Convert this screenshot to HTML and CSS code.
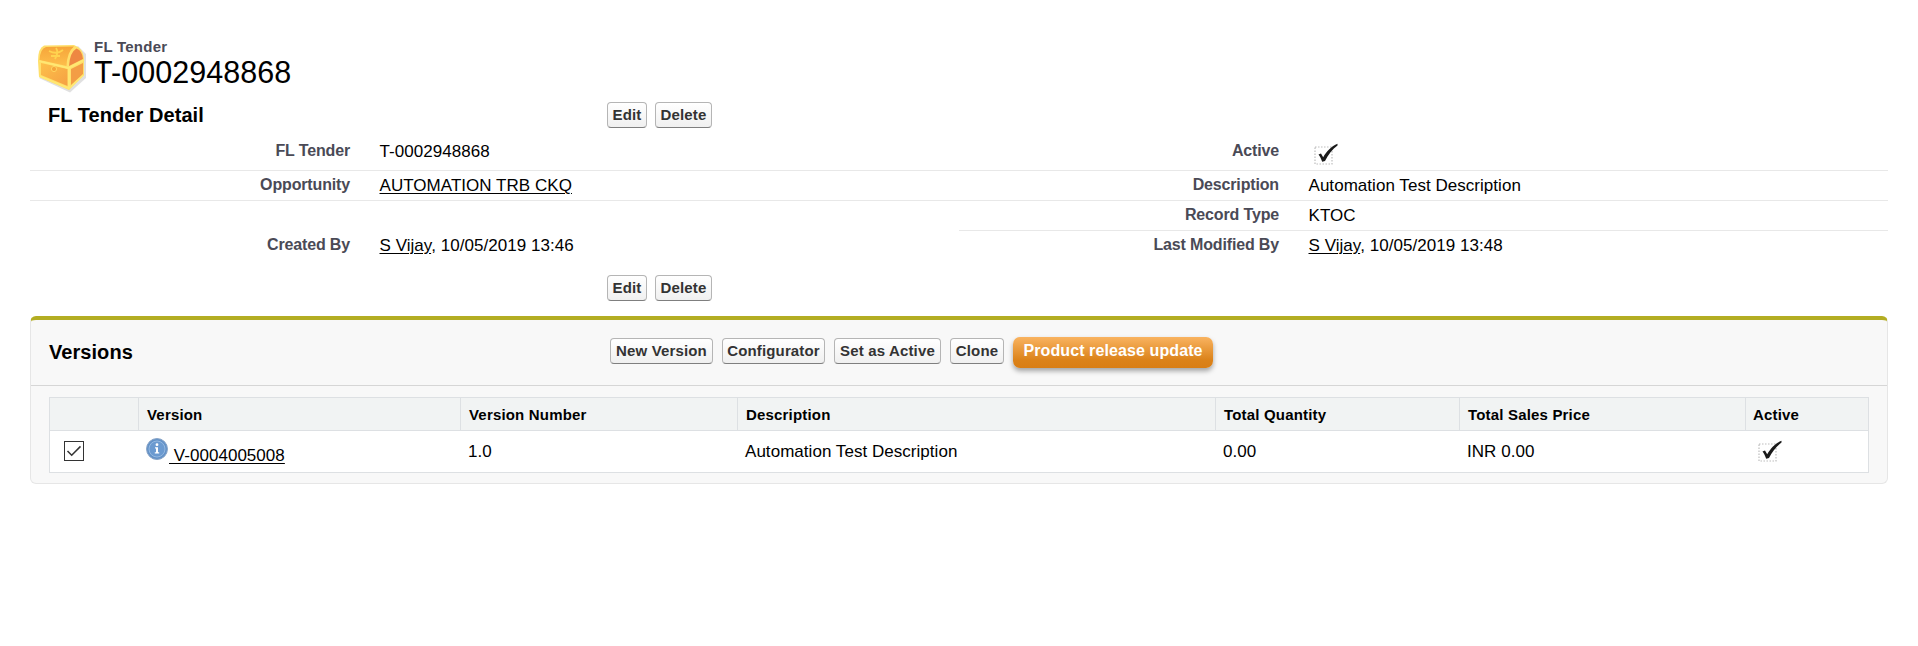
FILE: index.html
```html
<!DOCTYPE html>
<html lang="en">
<head>
<meta charset="utf-8">
<title>FL Tender: T-0002948868</title>
<link rel="stylesheet" href="styles.css">
</head>
<body>
<svg class="defs" aria-hidden="true">
  <symbol id="check" viewBox="0 0 24 24">
    <rect x="1" y="4" width="17" height="17" fill="#fff" stroke="#bdbdbd" stroke-width="1.2" stroke-dasharray="1.5 1.5"/>
    <path d="M4.500 11.500 7 10.500 9.200 14.200C12.500 8.500 17.500 3 23.500 .8V2.600C18.500 6.200 14 11.800 11 18L8.200 18.800C7.200 16 6 13.500 4.500 11.500Z" fill="#1a1a1a"/>
  </symbol>
</svg>
<main class="page">
  <header class="title">
    <svg class="chest" viewBox="0 0 48 50">
      <defs>
        <linearGradient id="lid" x1="0" y1="0" x2="0" y2="1"><stop offset="0" stop-color="#f6a53a"/><stop offset="1" stop-color="#fdbe4b"/></linearGradient>
        <linearGradient id="front" x1="0" y1="0" x2="1" y2="1"><stop offset="0" stop-color="#fdc04a"/><stop offset="1" stop-color="#f5a043"/></linearGradient>
      </defs>
      <path d="M1 34 32 48.500 48 34V10L40 2Z" fill="#999" opacity=".3"/>
      <path d="M0 17Q0 4 6 1.500L36 1Q45 4 46 14V31L31 46 1 33Z" fill="#ffdf6b"/>
      <path d="M1.500 16Q2 5 8 3L36 2.500Q29 8 28.500 22Z" fill="url(#lid)"/>
      <path d="M31 22Q32 8 38.500 4.500Q44.500 7 45 15Z" fill="#ee8842"/>
      <path d="M3 19 29.500 25V42L3 31Z" fill="url(#front)"/>
      <path d="M33 25 45 19V30L33 41Z" fill="#f39d45"/>
      <path d="M18 4Q21 8 17 15M11 7Q19 11 25 6M13 12 22 12" fill="none" stroke="#ffd34f" stroke-width="1.800"/>
      <path d="M1 17 30.500 24 46 16M31 24V44M1.500 32 31 44.500 45.500 31" fill="none" stroke="#ffe873" stroke-width="1.700"/>
      <circle cx="16" cy="25" r="2.600" fill="#f5a43b" stroke="#ffd560"/>
    </svg>
    <div>
      <div class="kind">FL Tender</div>
      <h1 class="name">T-0002948868</h1>
    </div>
  </header>

  <section class="detail">
    <div class="bar">
      <h2 class="heading">FL Tender Detail</h2>
      <button class="btn edit">Edit</button><button class="btn delete">Delete</button>
    </div>
    <div class="fields">
      <div class="row first"><span class="label">FL Tender</span><span class="value">T-0002948868</span><span class="label">Active</span><span class="value"><svg class="check"><use href="#check"/></svg></span></div>
      <div class="row"><span class="label">Opportunity</span><span class="value"><a>AUTOMATION TRB CKQ</a></span><span class="label">Description</span><span class="value">Automation Test Description</span></div>
      <div class="row half"><span class="label">Record Type</span><span class="value">KTOC</span></div>
      <div class="row last"><span class="label">Created By</span><span class="value"><a>S Vijay</a>, 10/05/2019 13:46</span><span class="label">Last Modified By</span><span class="value"><a>S Vijay</a>, 10/05/2019 13:48</span></div>
    </div>
    <div class="bar foot">
      <span></span><button class="btn edit">Edit</button><button class="btn delete">Delete</button>
    </div>
  </section>

  <section class="versions">
    <div class="versions-head">
      <h2 class="heading">Versions</h2>
      <div class="actions">
        <button class="btn new">New Version</button>
        <button class="btn config">Configurator</button>
        <button class="btn set">Set as Active</button>
        <button class="btn clone">Clone</button>
        <button class="release">Product release update</button>
      </div>
    </div>
    <div class="table">
      <div class="tr th"><span></span><span>Version</span><span>Version Number</span><span>Description</span><span>Total Quantity</span><span>Total Sales Price</span><span>Active</span></div>
      <div class="tr td">
        <span class="pick"><svg class="box" viewBox="0 0 20 20"><rect x=".5" y=".5" width="19" height="19" fill="#fff" stroke="#333"/><path d="M3.500 10 7.700 14.200 16.500 5.400" fill="none" stroke="#333" stroke-width="1.500"/></svg></span>
        <span class="version"><svg class="info" viewBox="0 0 22 22"><circle cx="11" cy="11" r="10.500" fill="#6392c8" stroke="#8ba6c8"/><circle cx="11" cy="11" r="8" fill="#6b9ad0" stroke="#94b8e0"/><circle cx="11" cy="6.700" r="1.400" fill="#fff"/><path d="M9 9.300H12V14.300H13.200V15.600H8.800V14.300H10V10.600H9Z" fill="#fff"/></svg><a>&nbsp;V-0004005008</a></span>
        <span>1.0</span><span>Automation Test Description</span><span>0.00</span><span>INR 0.00</span><span class="active"><svg class="check"><use href="#check"/></svg></span>
      </div>
    </div>
  </section>
</main>
</body>
</html>
```
FILE: styles.css
```css
* { box-sizing: border-box; }
body { margin: 0; background: #fff; color: #000; font: 17px/20px "Liberation Sans", Arial, sans-serif; letter-spacing: .04px; }
h1, h2 { margin: 0; }
.defs { display: block; width: 0; height: 0; }
.page { padding: 38px 30px 0; }
a { color: inherit; text-decoration: underline; text-underline-offset: 2px; text-decoration-thickness: 1px; }

.title { display: flex; height: 62px; padding-left: 8px; }
.chest { width: 48px; height: 50px; margin: 6px 8px 0 0; }
.kind { color: #4a4a56; font-size: 15px; font-weight: bold; line-height: 18px; letter-spacing: .25px; }
.name { font-size: 30.5px; font-weight: normal; line-height: 32px; }

.heading { font-size: 20px; font-weight: bold; line-height: 24px; letter-spacing: .06px; }
.bar { display: grid; grid-template-columns: 551px 40px 57px; column-gap: 8px; height: 36px; padding: 2px 0 0 18px; }
.bar .heading { padding-top: 1px; }
.btn { height: 26px; padding: 0; border: 1px solid #b5b5b5; border-bottom-color: #7f7f7f; border-radius: 4px; background: linear-gradient(#fff, #f0f0f0); color: #333; font: bold 15px/20px "Liberation Sans", Arial, sans-serif; letter-spacing: .15px; white-space: nowrap; }

.row { display: grid; grid-template-columns: 320px 609px 320px 609px; height: 30px; padding-top: 5px; border-bottom: 1px solid #e8e8e8; }
.first { height: 35px; }
.half { grid-template-columns: 320px 609px; margin-left: 929px; }
.last { border: 0; }
.label { color: #4a4a56; font-size: 16px; font-weight: bold; line-height: 18px; letter-spacing: -.15px; text-align: right; }
.first .label { line-height: 19px; }
.value { padding-left: 29.5px; white-space: nowrap; }
.first .value { line-height: 22px; }
.check { display: block; width: 24px; height: 24px; }
.value .check { margin: 2px 0 0 5px; }
.foot { height: 55px; padding-top: 14px; }

.versions { height: 168px; border: 1px solid #e6e6e6; border-top: 4px solid #b3ad22; border-radius: 6px; background: #f8f8f8; }
.versions-head { display: grid; grid-template-columns: 561px 1fr; height: 66px; padding: 0 0 0 18px; border-bottom: 1px solid #d6d6d6; }
.versions-head .heading { padding-top: 20px; }
.actions { display: flex; gap: 9px; padding-top: 18px; }
.new, .config { width: 103px; }
.set { width: 107px; }
.clone { width: 54px; }
.release { width: 200px; height: 31px; margin-top: -1px; padding: 0 0 4px; border: 0; border-radius: 7px; background: linear-gradient(#f9b360, #db8219 75%, #d97e14); box-shadow: 0 3px 5px rgba(0, 0, 0, .35); color: #fff; font: bold 16px/20px "Liberation Sans", Arial, sans-serif; letter-spacing: .1px; }

.table { width: 1820px; height: 76px; margin: 11px 0 0 18px; border: 1px solid #dde0e3; background: #fff; }
.tr { display: grid; grid-template-columns: 89px 322px 277px 478px 244px 286px 122px; }
.th { height: 33px; border-bottom: 1px solid #dde0e3; background: #f1f3f3; font-size: 15px; font-weight: bold; line-height: 20px; letter-spacing: .18px; }
.th span { padding: 7px 0 0 8px; border-right: 1px solid #dde0e3; }
.th span:last-child { border: 0; padding-left: 7px; }
.td { height: 41px; }
.td > span { padding: 11px 0 0 7px; }
.td .pick { padding: 10px 0 0 14px; }
.td .version { display: flex; padding: 7px 0 0 7px; }
.box { display: block; width: 20px; height: 20px; }
.info { width: 22px; height: 22px; margin-right: 1px; }
.version a { padding-top: 8px; }
.td .active { padding: 9px 0 0 12px; }
```
